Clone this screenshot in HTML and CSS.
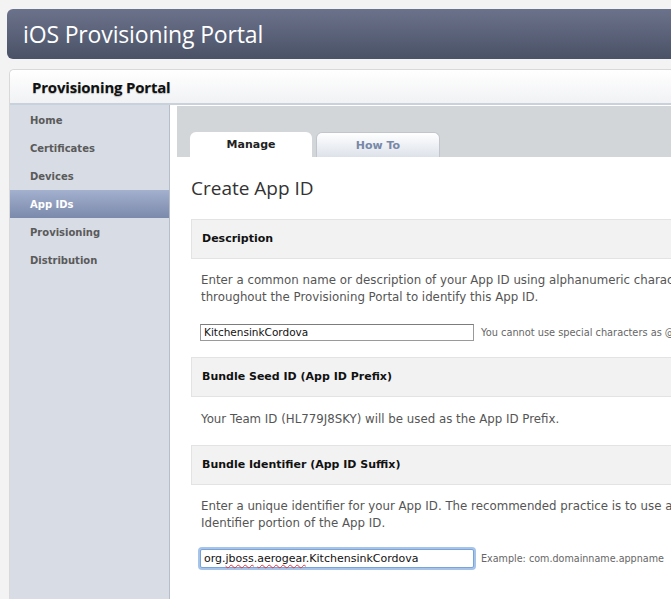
FILE: index.html
```html
<!DOCTYPE html>
<html>
<head>
<meta charset="utf-8">
<link rel="stylesheet" href="styles.css">
</head>
<body>
<div class="page">
  <div class="topbar"><h1 class="topbar-title">iOS Provisioning Portal</h1></div>
  <div class="panel">
    <div class="panel-head"><span class="panel-title">Provisioning Portal</span></div>
    <div class="panel-body">
      <ul class="sidebar">
        <li class="nav-item">Home</li>
        <li class="nav-item">Certificates</li>
        <li class="nav-item">Devices</li>
        <li class="nav-item active">App IDs</li>
        <li class="nav-item">Provisioning</li>
        <li class="nav-item">Distribution</li>
      </ul>
      <div class="content">
        <div class="tabstrip">
          <div class="tab tab-on">Manage</div>
          <div class="tab tab-off">How To</div>
        </div>
        <div class="main">
          <h2 class="page-title">Create App ID</h2>

          <div class="sec-head">Description</div>
          <p class="sec-text">Enter a common name or description of your App ID using alphanumeric characters. The description you specify will be used<br>throughout the Provisioning Portal to identify this App ID.</p>
          <div class="field-row">
            <div class="input">KitchensinkCordova</div>
            <span class="hint">You cannot use special characters as @, &amp;, *, " in your description.</span>
          </div>

          <div class="sec-head">Bundle Seed ID (App ID Prefix)</div>
          <p class="sec-text one">Your Team ID (HL779J8SKY) will be used as the App ID Prefix.</p>

          <div class="sec-head">Bundle Identifier (App ID Suffix)</div>
          <p class="sec-text">Enter a unique identifier for your App ID. The recommended practice is to use a reverse-domain name style string for the Bundle<br>Identifier portion of the App ID.</p>
          <div class="field-row focus-row">
            <div class="input focus">org.<span class="wavy">jboss</span>.<span class="wavy">aerogear</span>.KitchensinkCordova</div>
            <span class="hint hint-small">Example: com.domainname.appname</span>
          </div>
        </div>
      </div>
    </div>
  </div>
</div>
</body>
</html>
```

FILE: styles.css
```css
html, body {
  margin: 0;
  padding: 0;
  width: 671px;
  height: 599px;
  overflow: hidden;
  background: #f3f3f3;
}
.page {
  width: 900px;
  height: 599px;
  padding-top: 9px;
  box-sizing: border-box;
  display: flex;
  flex-direction: column;
  font-family: "DejaVu Sans", sans-serif;
}
.topbar {
  flex-shrink: 0;
  margin-left: 7px;
  height: 50px;
  border-radius: 6px 0 0 6px;
  background: linear-gradient(#6b728b, #4a5267);
  display: flex;
  align-items: center;
  padding-left: 16px;
}
.topbar-title {
  margin: 0 0 1px 0;
  font-family: "Open Sans", sans-serif;
  font-weight: 400;
  font-size: 23px;
  color: #fff;
  letter-spacing: -0.15px;
}
.panel {
  flex: 1;
  min-height: 0;
  display: flex;
  flex-direction: column;
  margin: 10px 0 0 9px;
  border: 1px solid #d9d9d9;
  border-right: none;
  border-bottom: none;
  border-radius: 5px 0 0 0;
  background: #fff;
}
.panel-head {
  flex-shrink: 0;
  height: 33px;
  border-bottom: 2px solid #c9d1dc;
  background: linear-gradient(#fff, #f1f2f4);
  display: flex;
  align-items: center;
  padding-left: 22px;
  border-radius: 5px 0 0 0;
}
.panel-title {
  font-family: "Open Sans", sans-serif;
  font-weight: 700;
  font-size: 15px;
  color: #111;
  text-shadow: 0 1px 1px rgba(0,0,0,0.25);
  letter-spacing: -0.2px;
}
.panel-body {
  flex: 1;
  min-height: 0;
  display: flex;
}
.sidebar {
  flex-shrink: 0;
  list-style: none;
  margin: 0;
  padding: 1px 0 0 0;
  width: 159px;
  background: #d8dce5;
  border-right: 1px solid #b7bdc9;
}
.nav-item {
  height: 28px;
  line-height: 30px;
  padding-left: 20px;
  font-size: 10px;
  font-weight: 700;
  color: #5a5a5a;
}
.nav-item.active {
  background: linear-gradient(#a3b0ce, #7b89ab);
  color: #fff;
}
.content {
  flex: 1;
  min-width: 0;
  padding: 1px 0 0 7px;
}
.tabstrip {
  background: #d3d6d9;
  height: 51px;
  display: flex;
  align-items: flex-end;
  gap: 4px;
  padding-left: 13px;
}
.tab {
  width: 122px;
  height: 25px;
  line-height: 26px;
  text-align: center;
  font-size: 11px;
  font-weight: 700;
  border-radius: 6px 6px 0 0;
}
.tab-on {
  background: #fff;
  color: #222;
}
.tab-off {
  background: linear-gradient(#fff, #dde2ea);
  color: #7788a8;
  border: 1px solid #c2c6cc;
  border-bottom: none;
  height: 24px;
}
.main {
  padding-left: 14px;
}
.page-title {
  margin: 18px 0 18px 0;
  font-family: "Open Sans", sans-serif;
  font-weight: 400;
  font-size: 19px;
  color: #333;
}
.sec-head {
  height: 38px;
  line-height: 38px;
  background: #f2f2f2;
  border: 1px solid #e3e3e3;
  border-right: none;
  padding-left: 10px;
  font-size: 11px;
  font-weight: 700;
  color: #111;
}
.sec-text {
  margin: 13px 0 0 10px;
  font-size: 11.8px;
  line-height: 17px;
  color: #555;
  white-space: nowrap;
}
.sec-text.one {
  margin: 14px 0 17px 10px;
}
.field-row {
  display: flex;
  align-items: center;
  gap: 7px;
  margin: 18px 0 16px 9px;
}
.focus-row {
  margin-top: 17px;
}
.input {
  box-sizing: border-box;
  flex-shrink: 0;
  width: 274px;
  height: 17px;
  line-height: 15px;
  border: 1px solid #9a9a9a;
  border-top-color: #7c7c7c;
  padding-left: 3px;
  font-size: 10.5px;
  color: #111;
  background: #fff;
}
.input.focus {
  height: 19px;
  line-height: 17px;
  font-size: 11px;
  border: 1px solid #7aa3d8;
  box-shadow: 0 0 0 2px #a6c4ea;
  border-radius: 2px;
}
.wavy {
  text-decoration: underline wavy #e33;
  text-decoration-thickness: 1px;
  text-underline-offset: 2px;
}
.hint {
  font-size: 9.8px;
  color: #666;
  white-space: nowrap;
}
.hint-small {
  font-size: 9.6px;
}
```
